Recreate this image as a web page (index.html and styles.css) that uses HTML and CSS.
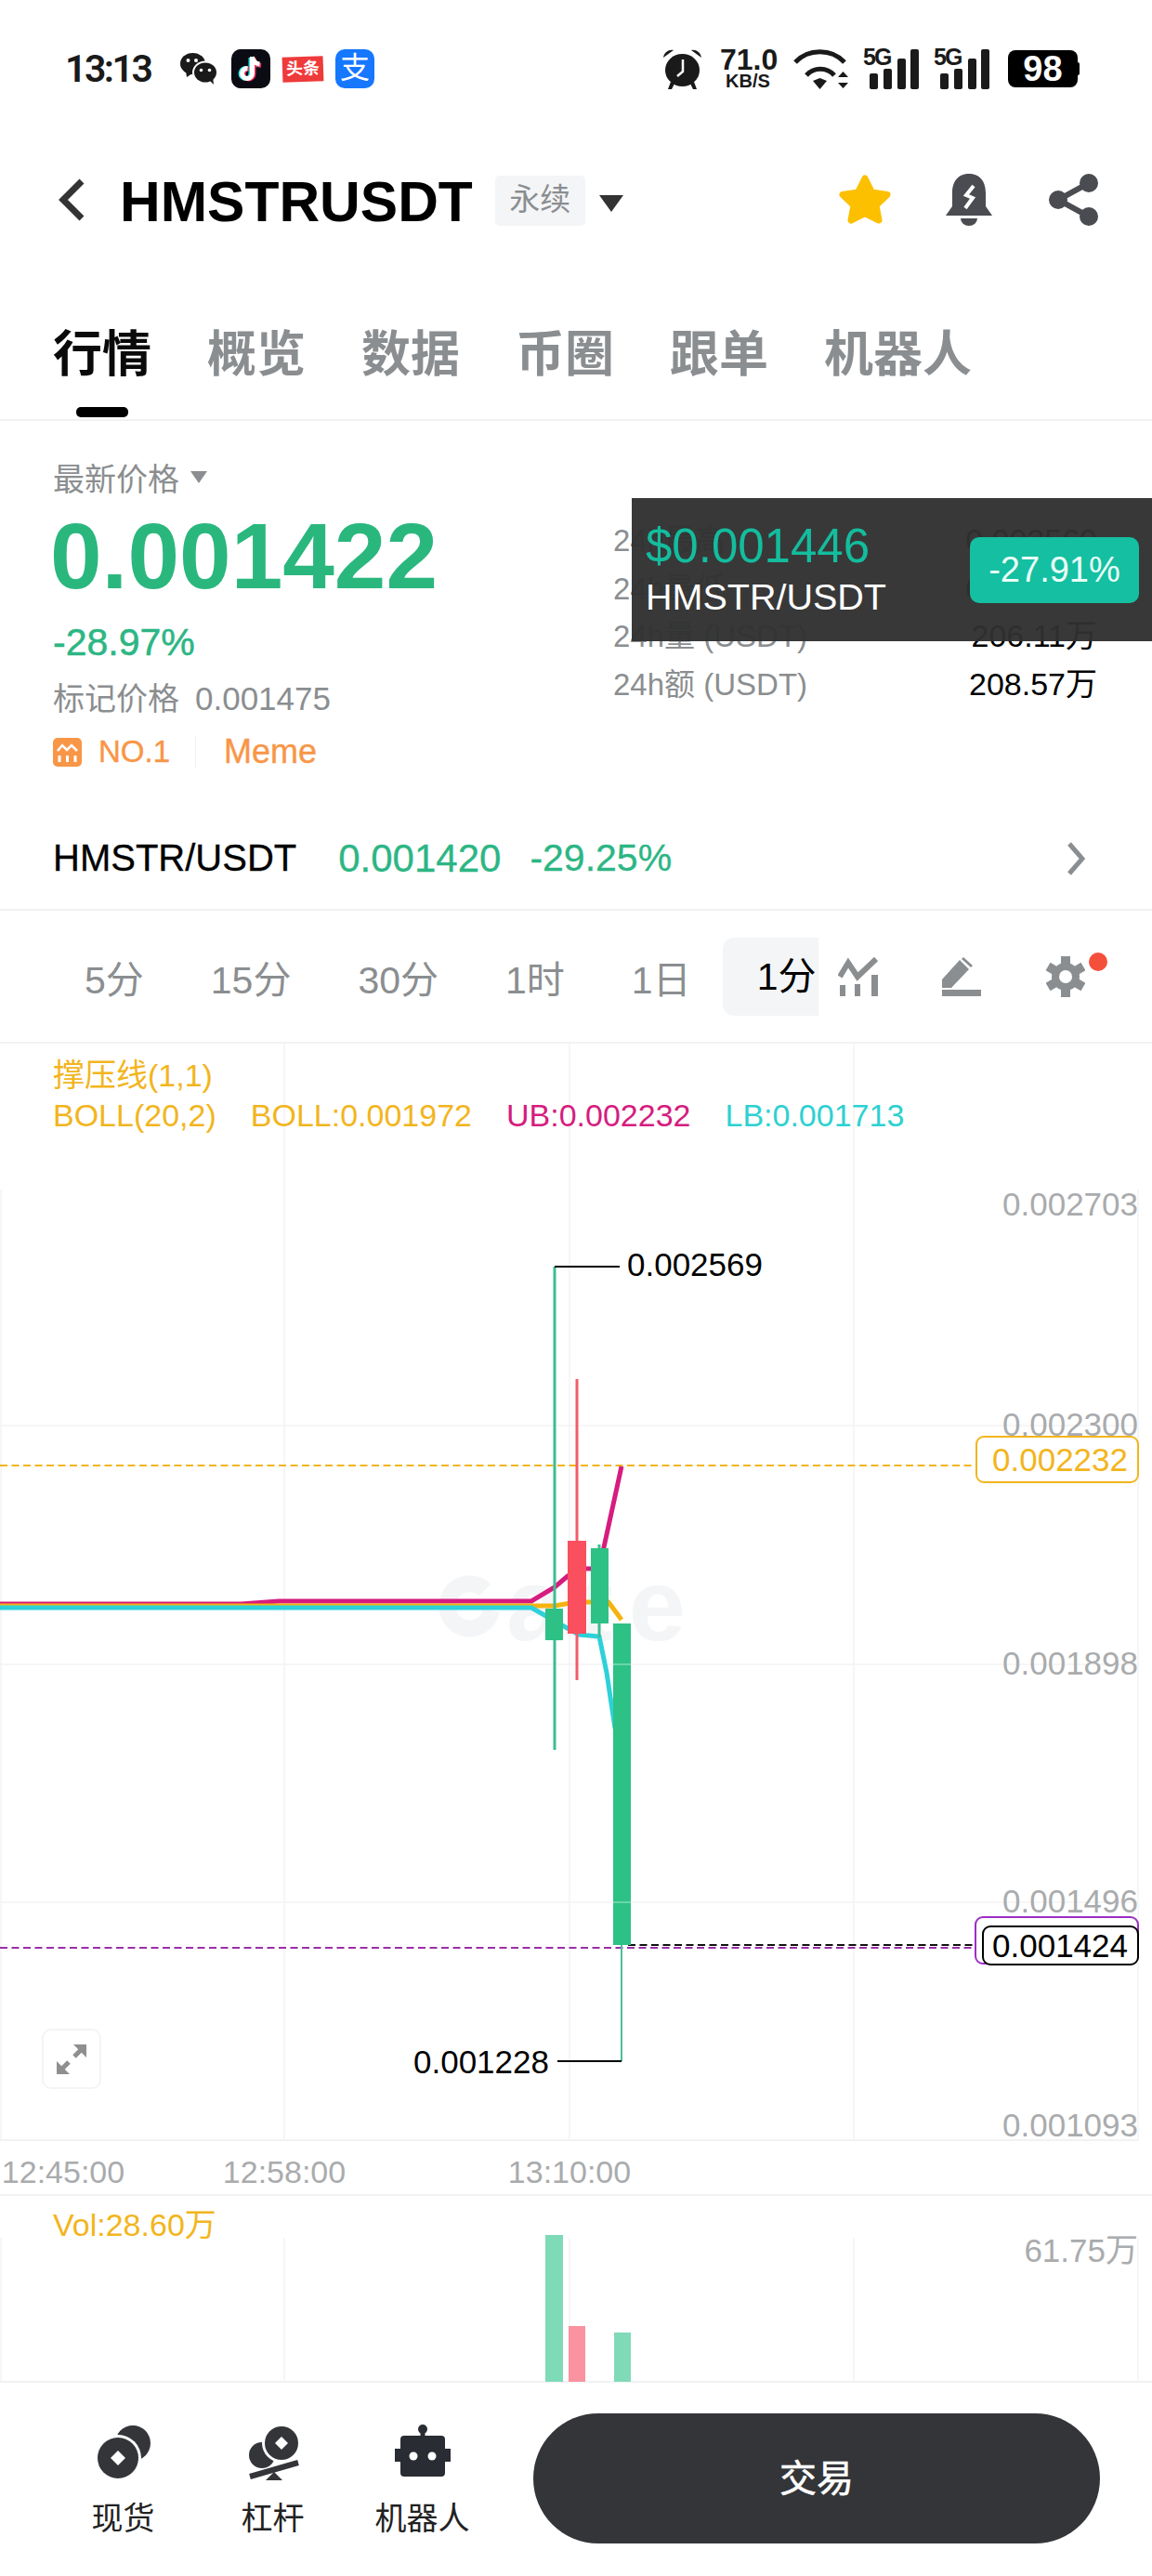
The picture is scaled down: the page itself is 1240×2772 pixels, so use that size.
FILE: index.html
```html
<!DOCTYPE html>
<html>
	<head>
		<meta charset="utf-8">
		<title>HMSTRUSDT 永续</title>
		<link rel="stylesheet" href="styles.css">
	</head>
	<body>
		<div class="status">
			<span class="clock">13:13</span>
			<svg class="ic-wechat" viewBox="0 0 40 34" width="40" height="34">
				<ellipse cx="13.500" cy="11.500" rx="13.500" ry="11.500" fill="#1a1a1a"/>
				<path d="M6 19l1 7 6-4z" fill="#1a1a1a"/>
				<ellipse cx="27" cy="21" rx="14" ry="12.500" fill="#fff"/>
				<ellipse cx="27" cy="21" rx="12" ry="10.500" fill="#1a1a1a"/>
				<path d="M31 29l5 5-1-8z" fill="#1a1a1a"/>
				<circle cx="8.500" cy="8" r="2" fill="#fff"/><circle cx="17" cy="8" r="2" fill="#fff"/>
				<circle cx="22.500" cy="18.500" r="1.800" fill="#fff"/><circle cx="31.500" cy="18.500" r="1.800" fill="#fff"/>
			</svg>
			<svg class="ic-tiktok" viewBox="0 0 42 42" width="42" height="42">
				<rect width="42" height="42" rx="10" fill="#0b0b14"/>
				<g fill="none" stroke-width="5">
					<path d="M21 9v17a5.500 5.500 0 1 1-5-5.500M21 9c.6 4.500 3.500 7.500 8 8" stroke="#25e2e0"/>
					<path d="M24 9.500v17a5.500 5.500 0 1 1-5-5.500M24 9.500c.6 4.500 3.500 7.500 8 8" stroke="#f0305a"/>
					<path d="M22.500 8v18a5.500 5.500 0 1 1-5-5.500M22.500 8c.6 4.500 3.500 7.500 8 8" stroke="#fff"/>
				</g>
			</svg>
			<span class="toutiao">头条</span>
			<span class="alipay">支</span>
			<div class="status-right">
				<svg class="ic-alarm" viewBox="0 0 43 44" width="43" height="44">
					<ellipse cx="21.500" cy="23.500" rx="18.500" ry="17.500" fill="#1a1a1a"/>
					<path d="M1 10c1-6 6-9 11-8zM42 10c-1-6-6-9-11-8z" fill="#1a1a1a"/>
					<path d="M9 36l-3 8h4l3-6zM34 36l3 8h-4l-3-6z" fill="#1a1a1a"/>
					<path d="M22 12v13l-6 5" fill="none" stroke="#fff" stroke-width="2.500"/>
				</svg>
				<div class="speed"><b>71.0</b><i>KB/S</i></div>
				<svg class="ic-wifi" viewBox="0 0 59 43" width="59" height="43">
					<path d="M2 14C16-1 41-1 55 14M14 28c8-9 22-9 30 0" fill="none" stroke="#1a1a1a" stroke-width="5"/>
					<path d="M21 34l7.500-3 7.500 3-7.500 9z" fill="#1a1a1a"/>
					<path d="M48 30l5.500-6 5.500 6zM48 36h11l-5.500 6z" fill="#1a1a1a"/>
				</svg>
				<svg class="ic-signal" viewBox="0 -6 60 50" width="60" height="50">
					<text class="sig-text" x="0" y="18">5G</text>
					<rect x="7" y="27" width="9" height="17" rx="2"/><rect x="22" y="22" width="9" height="22" rx="2"/>
					<rect x="37" y="11" width="9" height="33" rx="2"/><rect x="51" y="1" width="9" height="43" rx="2"/>
				</svg>
				<svg class="ic-signal" viewBox="0 -6 60 50" width="60" height="50">
					<text class="sig-text" x="0" y="18">5G</text>
					<rect x="7" y="27" width="9" height="17" rx="2"/><rect x="22" y="22" width="9" height="22" rx="2"/>
					<rect x="37" y="11" width="9" height="33" rx="2"/><rect x="51" y="1" width="9" height="43" rx="2"/>
				</svg>
				<span class="battery">98</span>
			</div>
		</div>

		<div class="nav">
			<svg class="ic-back" viewBox="0 0 28 46" width="28" height="46"><path d="M25 3L5 23l20 20" fill="none" stroke="#333" stroke-width="7"/></svg>
			<span class="symbol">HMSTRUSDT</span>
			<span class="tag">永续</span>
			<span class="caret"></span>
			<svg class="ic-star" viewBox="0 0 58 56" width="58" height="56"><polygon points="29,5 36.500,20 53,22.500 41,34 44,50 29,42.500 14,50 17,34 5,22.500 21.500,20" fill="#fcc000" stroke="#fcc000" stroke-width="7" stroke-linejoin="round"/></svg>
			<svg class="ic-bell" viewBox="0 0 50 56" width="50" height="56">
				<path d="M25 0C12 0 7 10 7 20v15L0 45h50l-7-10V20C43 10 38 0 25 0z" fill="#4a4c52"/>
				<path d="M16 48a9 8 0 0 0 18 0z" fill="#4a4c52"/>
				<path d="M30 13l-8 10 7 3-8 11" fill="none" stroke="#fff" stroke-width="4"/>
			</svg>
			<svg class="ic-share" viewBox="0 0 53 56" width="53" height="56">
				<path d="M43 10L10 28l33 18" fill="none" stroke="#4a4c52" stroke-width="6"/>
				<circle cx="10" cy="28" r="10" fill="#4a4c52"/><circle cx="43" cy="10" r="10" fill="#4a4c52"/><circle cx="43" cy="46" r="10" fill="#4a4c52"/>
			</svg>
		</div>

		<div class="tabs">
			<span class="tab tab-on">行情</span>
			<span class="tab">概览</span>
			<span class="tab">数据</span>
			<span class="tab">币圈</span>
			<span class="tab">跟单</span>
			<span class="tab">机器人</span>
		</div>

		<div class="summary">
			<div class="price-col">
				<div class="latest">最新价格<span class="caret-small"></span></div>
				<div class="price">0.001422</div>
				<div class="change">-28.97%</div>
				<div class="mark">标记价格<span class="mark-val">0.001475</span></div>
				<div class="rank">
					<svg viewBox="0 0 31 31" width="31" height="31">
						<rect width="31" height="31" rx="5" fill="#f89647"/>
						<path d="M5 14l5-6 5 5 5-5 6 6" fill="none" stroke="#fff" stroke-width="2.500"/>
						<path d="M7 19v7M15.500 19v7M24 19v7" stroke="#fff" stroke-width="3"/>
					</svg>
					<span class="rank-no">NO.1</span>
					<span class="rank-tag">Meme</span>
				</div>
			</div>
			<div class="stats">
				<div class="stat"><span>24h最高</span><b>0.002569</b></div>
				<div class="stat"><span>24h最低</span><b>0.001228</b></div>
				<div class="stat"><span>24h量 (USDT)</span><b>206.11万</b></div>
				<div class="stat"><span>24h额 (USDT)</span><b>208.57万</b></div>
			</div>
			<div class="ticker">
				<div>
					<div class="ticker-price">$0.001446</div>
					<div class="ticker-pair">HMSTR/USDT</div>
				</div>
				<span class="ticker-badge">-27.91%</span>
			</div>
		</div>

		<div class="pair">
			<span class="pair-name">HMSTR/USDT</span>
			<span class="pair-price">0.001420</span>
			<span class="pair-change">-29.25%</span>
			<svg class="ic-more" viewBox="0 0 20 36" width="20" height="36"><path d="M3 2l14 16L3 34" fill="none" stroke="#8b8e90" stroke-width="5"/></svg>
		</div>

		<div class="frames">
			<span class="frame">5分</span>
			<span class="frame">15分</span>
			<span class="frame">30分</span>
			<span class="frame">1时</span>
			<span class="frame">1日</span>
			<span class="frame frame-on">1分</span>
			<svg class="ic-index" viewBox="0 0 43 43" width="43" height="43">
				<path d="M2 22l9-15 10 15L41 3" fill="none" stroke="#8b8e90" stroke-width="6"/>
				<path d="M2 31h6v12H2zM18 30h6v13h-6zM36 20h7v23h-7z" fill="#8b8e90"/>
			</svg>
			<svg class="ic-draw" viewBox="0 0 42 42" width="42" height="42">
				<path d="M0 33v-9L19 3l10 10-19 20zM23 0l10 9-2 2-10-9zM0 35h42v7H0z" fill="#8b8e90"/>
			</svg>
			<span class="gear">
				<svg viewBox="0 0 42 44" width="42" height="44">
					<path d="M21 0v44M2 11l38 22M40 11L2 33" stroke="#8b8e90" stroke-width="10"/>
					<circle cx="21" cy="22" r="15" fill="#8b8e90"/>
					<circle cx="21" cy="22" r="7" fill="#fff"/>
				</svg>
				<i class="gear-dot"></i>
			</span>
		</div>

		<div class="chart">
			<svg class="chart-svg" viewBox="0 1123 1240 1442" width="1240" height="1442">
				<!-- grid -->
				<path class="grid" d="M1 1280V2304M306 1123V2304M613 1123V2304M919 1123V2304M1225 1280V2304M0 1534H1225M0 1791H1225M0 2047H1225"/>
				<path class="rule" d="M0 2303H1225M0 2362H1240M0 2563H1240"/>
				<path class="grid" d="M1 2408V2562M306 2408V2562M613 2408V2562M919 2408V2562M1225 2408V2562"/>

				<!-- watermark -->
				<path class="mark-logo" d="M522 1711a24 24 0 1 0 7 22"/>
				<text class="mark-text" x="545" y="1765">ate</text>

				<!-- dashed levels -->
				<path class="dash-yellow" d="M0 1577H1050"/>
				<path class="dash-purple" d="M0 2096H1050"/>
				<path class="dash-black" d="M676 2093H1058"/>

				<!-- boll -->
				<polyline class="ln ln-ub" points="0,1726 260,1726 300,1723 572,1723 597,1708 611,1696 631,1688 645,1688 650,1665 669,1578"/>
				<polyline class="ln ln-boll" points="0,1728 597,1728 620,1724 655,1724 669,1743"/>
				<polyline class="ln ln-lb" points="0,1730 572,1730 607,1750 623,1759 645,1761 653,1800 662,1860"/>

				<!-- candles -->
				<path class="wick-up" d="M597 1363V1883M645 1662V1762"/>
				<path class="wick-last" d="M669 2093V2218"/>
				<path class="wick-down" d="M621 1484V1808"/>
				<rect class="candle-g" x="587" y="1731" width="19" height="34"/>
				<rect class="candle-r" x="611" y="1658" width="20" height="100"/>
				<rect class="candle-g" x="636" y="1666" width="19" height="81"/>
				<rect class="candle-g" x="660" y="1747" width="19" height="346"/>
				<path class="grid-over" d="M660 1791H679M660 2047H679"/>

				<!-- high and low -->
				<path class="leader" d="M597 1363H667M600 2218H669"/>
				<text class="note" x="675" y="1373">0.002569</text>
				<text class="note" x="445" y="2231">0.001228</text>

				<!-- price scale -->
				<text class="scale" x="1225" y="1308">0.002703</text>
				<text class="scale" x="1225" y="1545">0.002300</text>
				<text class="scale" x="1225" y="1802">0.001898</text>
				<text class="scale" x="1225" y="2058">0.001496</text>
				<text class="scale" x="1225" y="2299">0.001093</text>
				<rect class="box-yellow" x="1051" y="1546" width="174" height="49" rx="8"/>
				<text class="scale scale-yellow" x="1214" y="1583">0.002232</text>
				<rect class="box-purple" x="1050" y="2063" width="175" height="50" rx="8"/>
				<rect class="box-black" x="1058" y="2073" width="167" height="41" rx="8"/>
				<text class="scale scale-black" x="1214" y="2106">0.001424</text>

				<!-- time axis -->
				<text class="time" x="68" y="2349">12:45:00</text>
				<text class="time" x="306" y="2349">12:58:00</text>
				<text class="time" x="613" y="2349">13:10:00</text>

				<!-- volume -->
				<text class="vol" x="57" y="2406">Vol:28.60万</text>
				<text class="scale" x="1225" y="2434">61.75万</text>
				<rect class="vol-g" x="587" y="2405" width="19" height="158"/>
				<rect class="vol-r" x="612" y="2503" width="18" height="60"/>
				<rect class="vol-g" x="661" y="2510" width="18" height="53"/>
			</svg>
			<div class="legend">
				<div class="legend-line">撑压线(1,1)</div>
				<div class="legend-line legend-boll">
					<span>BOLL(20,2)</span>
					<span>BOLL:0.001972</span>
					<span class="c-ub">UB:0.002232</span>
					<span class="c-lb">LB:0.001713</span>
				</div>
			</div>
			<div class="expand">
				<svg viewBox="0 0 32 32" width="32" height="32">
					<path d="M18 0h14v14zM0 18v14h14z" fill="#8f8f8f"/>
					<path d="M6 26l7-7M19 13l7-7" stroke="#8f8f8f" stroke-width="5"/>
				</svg>
			</div>
		</div>

		<div class="bar">
			<div class="tool">
				<svg viewBox="0 0 60 60" width="60" height="60">
					<circle cx="40" cy="20" r="19" fill="#333538"/>
					<circle cx="24" cy="36" r="25" fill="#fff"/>
					<circle cx="24" cy="36" r="22" fill="#333538"/>
					<path d="M24 28l8 8-8 8-8-8z" fill="#fff"/>
				</svg>
				<span>现货</span>
			</div>
			<div class="tool">
				<svg viewBox="0 0 60 60" width="60" height="60">
					<circle cx="18" cy="33" r="14" fill="#333538"/>
					<circle cx="39" cy="20" r="21" fill="#fff"/>
					<circle cx="39" cy="20" r="18" fill="#333538"/>
					<path d="M39 13l7 7-7 7-7-7z" fill="#fff"/>
					<path d="M5 56l52-15" stroke="#333538" stroke-width="6"/>
					<path d="M31 51l-9 9h18z" fill="#333538"/>
				</svg>
				<span>杠杆</span>
			</div>
			<div class="tool">
				<svg viewBox="0 0 60 60" width="60" height="60">
					<circle cx="30" cy="5" r="5" fill="#2a2c33"/>
					<path d="M27.500 8h5v6h-5z" fill="#2a2c33"/>
					<rect x="6" y="12" width="48" height="44" rx="4" fill="#2a2c33"/>
					<path d="M0 26h6v14H0zM54 26h6v14h-6z" fill="#2a2c33"/>
					<circle cx="20" cy="34" r="4.500" fill="#fff"/><circle cx="40" cy="34" r="4.500" fill="#fff"/>
				</svg>
				<span>机器人</span>
			</div>
			<div class="trade">交易</div>
		</div>
	</body>
</html>
```

FILE: styles.css
```css
*{
	margin:0;
	padding:0;
	box-sizing:border-box;
}
body{
	width:1240px;
	background:#fff;
	color:#000;
	font-family:"Liberation Sans","Noto Sans CJK SC",sans-serif;
}
svg{
	display:block;
	flex:none;
}

/* status bar */
.status{
	display:flex;
	align-items:center;
	height:148px;
	padding:0 78px 0 70px;
	color:#1a1a1a;
}
.clock{
	width:92px;
	font-family:Roboto,sans-serif;
	font-size:41px;
	font-weight:600;
	letter-spacing:-2.500px;
}
.ic-wechat{
	margin-left:32px;
}
.ic-tiktok{
	margin-left:15px;
}
.toutiao{
	width:44px;
	height:27px;
	margin-left:13px;
	background:#ee3a3a;
	color:#fff;
	font-size:18px;
	font-weight:700;
	line-height:27px;
	text-align:center;
	transform:rotate(-2deg);
}
.alipay{
	width:42px;
	height:42px;
	margin-left:13px;
	border-radius:10px;
	background:#1677ff;
	color:#fff;
	font-size:32px;
	line-height:40px;
	text-align:center;
}
.status-right{
	display:flex;
	align-items:center;
	margin-left:auto;
}
.speed{
	width:60px;
	margin-left:19px;
	text-align:center;
}
.speed b,.speed i{
	display:block;
	font-style:normal;
	font-weight:700;
}
.speed b{
	font-size:32px;
	line-height:26px;
}
.speed i{
	font-size:20px;
	line-height:20px;
}
.ic-wifi{
	margin-left:19px;
}
.ic-signal{
	margin:-6px 0 0 16px;
	fill:#1a1a1a;
}
.sig-text{
	font-size:25px;
	font-weight:700;
	letter-spacing:-2px;
}
.battery{
	position:relative;
	width:75px;
	height:40px;
	margin:0 2px 0 20px;
	border-radius:8px;
	background:#000;
	color:#fff;
	font-size:38px;
	font-weight:700;
	line-height:40px;
	text-align:center;
}
.battery::after{
	content:"";
	position:absolute;
	left:75px;
	top:13px;
	width:2px;
	height:14px;
	border-radius:0 2px 2px 0;
	background:#000;
}

/* title */
.nav{
	display:flex;
	align-items:center;
	height:134px;
	padding-left:63px;
}
.symbol{
	margin:3px 0 0 38px;
	font-size:60.500px;
	font-weight:700;
	line-height:70px;
}
.tag{
	width:97px;
	height:54px;
	margin:2px 0 0 24px;
	border-radius:5px;
	background:#f4f5f6;
	color:#8b8e90;
	font-size:33px;
	line-height:52px;
	text-align:center;
}
.caret{
	width:0;
	height:0;
	margin:8px 0 0 15px;
	border-left:13px solid transparent;
	border-right:13px solid transparent;
	border-top:18px solid #333;
}
.ic-star{
	margin-left:231px;
}
.ic-bell{
	margin-left:58px;
}
.ic-share{
	margin-left:61px;
}

/* tabs */
.tabs{
	display:flex;
	gap:60px;
	height:171px;
	padding:65px 0 0 57px;
	border-bottom:2px solid #f1f2f3;
}
.tab{
	position:relative;
	height:70px;
	color:#8b8e90;
	font-size:53px;
	font-weight:700;
	line-height:70px;
}
.tab-on{
	color:#0a0a0a;
}
.tab-on::after{
	content:"";
	position:absolute;
	left:25px;
	bottom:-32px;
	width:56px;
	height:11px;
	border-radius:5px;
	background:#000;
}

/* price and day stats */
.summary{
	position:relative;
	display:flex;
	justify-content:space-between;
	height:416px;
	padding:0 59px 0 57px;
}
.latest{
	display:flex;
	align-items:center;
	height:40px;
	margin-top:40px;
	color:#8b8e90;
	font-size:34px;
}
.caret-small{
	width:0;
	height:0;
	margin-left:12px;
	border-left:9px solid transparent;
	border-right:9px solid transparent;
	border-top:13px solid #8b8e90;
}
.price{
	margin:20px 0 0 -3px;
	color:#2ab77e;
	font-size:100px;
	font-weight:700;
	line-height:90px;
}
.change{
	margin-top:23px;
	color:#2cb684;
	font-size:41px;
	line-height:50px;
	-webkit-text-stroke:.5px #2cb684;
}
.mark{
	margin-top:14px;
	color:#8b8e90;
	font-size:34px;
	line-height:44px;
}
.mark-val{
	margin-left:17px;
	font-size:35px;
}
.rank{
	display:flex;
	align-items:center;
	height:40px;
	margin-top:15px;
	color:#f89647;
	-webkit-text-stroke:.4px #f89647;
}
.rank-no{
	width:105px;
	margin-left:18px;
	border-right:1px solid #f1f2f3;
	font-size:33px;
	line-height:34px;
}
.rank-tag{
	margin-left:30px;
	font-size:36px;
}
.stats{
	width:521px;
	padding-top:103px;
}
.stat{
	display:flex;
	justify-content:space-between;
	height:51.500px;
	color:#8b8e90;
	font-size:33px;
	line-height:51px;
}
.stat b{
	color:#000;
	font-size:34px;
	font-weight:400;
}
.ticker{
	position:absolute;
	left:680px;
	right:0;
	top:83px;
	display:flex;
	align-items:center;
	justify-content:space-between;
	height:154px;
	padding:0 14px 0 15px;
	background:rgba(48,48,48,.96);
}
.ticker-price{
	color:#13bd9e;
	font-size:51px;
	line-height:58px;
}
.ticker-pair{
	color:#fff;
	font-size:39.500px;
	line-height:50px;
}
.ticker-badge{
	width:182px;
	height:71px;
	border-radius:10px;
	background:#15bfa1;
	color:#eafff8;
	font-size:38px;
	line-height:71px;
	text-align:center;
}

/* spot pair */
.pair{
	display:flex;
	align-items:center;
	height:111px;
	padding:0 72px 0 57px;
	border-bottom:2px solid #f1f2f3;
	font-size:41px;
	color:#2cb684;
	-webkit-text-stroke:.3px #2cb684;
}
.pair-name{
	color:#000;
	font-size:40px;
	-webkit-text-stroke:.3px #000;
}
.pair-price{
	margin-left:45px;
	font-size:42px;
}
.pair-change{
	margin-left:31px;
}
.ic-more{
	margin-left:auto;
}

/* intervals */
.frames{
	display:flex;
	align-items:center;
	height:143px;
	padding-left:91px;
	border-bottom:2px solid #f1f2f3;
}
.frame{
	margin-right:72px;
	color:#8b8e90;
	font-size:41px;
}
.frame:nth-child(5){
	margin-right:34px;
}
.frame-on{
	width:103px;
	height:84px;
	margin-right:21px;
	padding-left:37px;
	border-radius:12px 0 0 12px;
	background:#f4f5f7;
	color:#000;
	line-height:84px;
	white-space:nowrap;
}
.ic-draw{
	margin-left:69px;
}
.gear{
	position:relative;
	margin-left:70px;
}
.gear-dot{
	position:absolute;
	left:46px;
	top:-4px;
	width:20px;
	height:20px;
	border-radius:50%;
	background:#f44f3a;
}

/* chart */
.chart{
	position:relative;
	height:1442px;
}
.chart-svg{
	position:absolute;
	left:0;
	top:0;
}
.legend{
	position:relative;
	padding:14px 0 0 57px;
	color:#f2b51d;
	font-size:34px;
}
.legend-line{
	height:43px;
	line-height:40px;
}
.legend-boll{
	display:flex;
	gap:37px;
}
.c-ub{
	color:#d61c7f;
}
.c-lb{
	color:#2dd1d1;
}
.expand{
	position:absolute;
	left:45px;
	top:1060px;
	display:flex;
	align-items:center;
	justify-content:center;
	width:64px;
	height:65px;
	border:2px solid #f4f4f4;
	border-radius:10px;
	background:#fff;
}
.grid{
	fill:none;
	stroke:#f3f4f5;
	stroke-width:1.500;
}
.rule{
	fill:none;
	stroke:#f1f2f3;
	stroke-width:2;
}
.grid-over{
	stroke:#7fdcb8;
	stroke-width:1.500;
}
.mark-logo{
	fill:none;
	stroke:#f4f5f6;
	stroke-width:18;
}
.mark-text{
	fill:#f4f5f6;
	font-size:110px;
	font-weight:700;
	letter-spacing:17px;
}
.dash-yellow,.dash-purple,.dash-black{
	stroke-width:2;
	stroke-dasharray:8 4.500;
}
.dash-yellow{
	stroke:#f2b51d;
}
.dash-purple{
	stroke:#9a2fa7;
}
.dash-black{
	stroke:#111;
}
.ln{
	fill:none;
	stroke-width:5;
}
.ln-ub{
	stroke:#d61c7f;
}
.ln-boll{
	stroke:#f6b20f;
}
.ln-lb{
	stroke:#2dd1d9;
}
.wick-up{
	stroke:#3dbd92;
	stroke-width:3;
}
.wick-last{
	stroke:#4bbf96;
	stroke-width:2;
}
.wick-down{
	stroke:#f45b68;
	stroke-width:3;
}
.candle-g{
	fill:#2ec185;
}
.candle-r{
	fill:#f94f5e;
}
.leader{
	fill:none;
	stroke:#000;
	stroke-width:2;
}
.note{
	font-size:35px;
}
.scale{
	fill:#a9abad;
	font-size:35px;
	text-anchor:end;
}
.scale-yellow{
	fill:#f2b51d;
}
.scale-black{
	fill:#000;
}
.box-yellow{
	fill:#fff;
	stroke:#f2b51d;
	stroke-width:2;
}
.box-purple{
	fill:#fff;
	stroke:#9a2fc7;
	stroke-width:2;
}
.box-black{
	fill:#fff;
	stroke:#000;
	stroke-width:2;
}
.time{
	fill:#a9abad;
	font-size:34px;
	text-anchor:middle;
}
.vol{
	fill:#f2b51d;
	font-size:34px;
}
.vol-g{
	fill:#7fdab8;
}
.vol-r{
	fill:#fb929f;
}

/* bottom bar */
.bar{
	display:flex;
	align-items:flex-start;
	height:207px;
	padding-left:52px;
}
.tool{
	display:flex;
	flex-direction:column;
	align-items:center;
	width:161px;
	padding-top:44px;
	color:#222;
	font-size:34px;
	line-height:44px;
}
.tool span{
	margin-top:19px;
}
.trade{
	width:610px;
	height:140px;
	margin:32px 0 0 39px;
	border-radius:70px;
	background:#333538;
	color:#fff;
	font-size:40px;
	line-height:140px;
	text-align:center;
	-webkit-text-stroke:.6px #fff;
}
```
